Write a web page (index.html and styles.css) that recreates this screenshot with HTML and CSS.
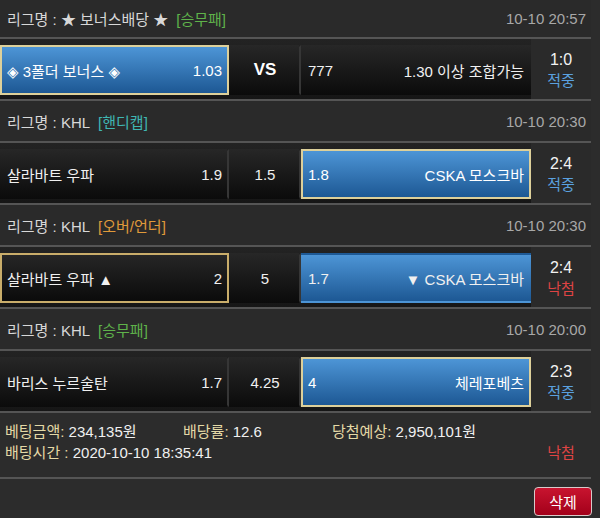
FILE: index.html
```html
<!DOCTYPE html>
<html lang="ko">
<head>
<meta charset="utf-8">
<title>배팅내역</title>
<link rel="stylesheet" href="styles.css">
</head>
<body>
<div class="page">
  <div class="block">
    <div class="league first">
      <span class="lbl">리그명 : ★ 보너스배당 ★</span><span class="tag green">[승무패]</span>
      <span class="time">10-10 20:57</span>
    </div>
    <div class="match">
      <div class="cell home sel-blue"><span>◈ 3폴더 보너스 ◈</span><span>1.03</span></div>
      <div class="cell mid"><b class="vs">VS</b></div>
      <div class="cell away"><span>777</span><span>1.30 이상 조합가능</span></div>
      <div class="score"><div>1:0</div><div class="hit">적중</div></div>
    </div>
  </div>

  <div class="block">
    <div class="league">
      <span class="lbl">리그명 : KHL</span><span class="tag cyan">[핸디캡]</span>
      <span class="time">10-10 20:30</span>
    </div>
    <div class="match">
      <div class="cell home"><span>살라바트 우파</span><span>1.9</span></div>
      <div class="cell mid"><span>1.5</span></div>
      <div class="cell away sel-blue"><span>1.8</span><span>CSKA 모스크바</span></div>
      <div class="score"><div>2:4</div><div class="hit">적중</div></div>
    </div>
  </div>

  <div class="block">
    <div class="league">
      <span class="lbl">리그명 : KHL</span><span class="tag orange">[오버/언더]</span>
      <span class="time">10-10 20:30</span>
    </div>
    <div class="match">
      <div class="cell home sel-dark"><span>살라바트 우파 ▲</span><span>2</span></div>
      <div class="cell mid"><span>5</span></div>
      <div class="cell away sel-blue-nb"><span>1.7</span><span>▼ CSKA 모스크바</span></div>
      <div class="score"><div>2:4</div><div class="miss">낙첨</div></div>
    </div>
  </div>

  <div class="block">
    <div class="league">
      <span class="lbl">리그명 : KHL</span><span class="tag green">[승무패]</span>
      <span class="time">10-10 20:00</span>
    </div>
    <div class="match">
      <div class="cell home"><span>바리스 누르술탄</span><span>1.7</span></div>
      <div class="cell mid"><span>4.25</span></div>
      <div class="cell away sel-blue"><span>4</span><span>체레포베츠</span></div>
      <div class="score"><div>2:3</div><div class="hit">적중</div></div>
    </div>
  </div>

  <div class="info">
    <div><span class="k">베팅금액:</span> 234,135원</div>
    <div><span class="k">배당률:</span> 12.6</div>
    <div><span class="k">당첨예상:</span> 2,950,101원</div>
    <div></div>
    <div class="span3"><span class="k">배팅시간 :</span> 2020-10-10 18:35:41</div>
    <div class="miss res">낙첨</div>
  </div>

  <div class="footer">
    <button class="del" type="button">삭제</button>
  </div>
</div>
</body>
</html>
```

FILE: styles.css
```css
html, body {
  margin: 0;
  padding: 0;
}
body {
  background: #2c2c2c;
  font-family: "Liberation Sans", "Noto Sans CJK KR", "DejaVu Sans", sans-serif;
  font-size: 15px;
  color: #f2f2f2;
  width: 600px;
  height: 518px;
  overflow: hidden;
}
.page {
  width: 600px;
}
.block {
  width: 591px;
}
.league {
  height: 40px;
  border-bottom: 2px solid #555;
  background: #2a2a2a;
  display: flex;
  align-items: center;
  padding: 0 5px 0 7px;
  box-sizing: content-box;
  width: 579px;
}
.league.first {
  height: 37px;
}
.lbl {
  color: #d8d8d8;
}
.tag {
  margin-left: 8px;
}
.tag.green { color: #5fb24a; }
.tag.cyan { color: #3fb6b2; }
.tag.orange { color: #e09a3a; }
.time {
  margin-left: auto;
  color: #a8a8a8;
}
.match {
  height: 60px;
  border-bottom: 2px solid #555;
  display: grid;
  grid-template-columns: 229px 72px 230px 60px;
  background: linear-gradient(#232323, #161616);
}
.cell {
  margin-top: 6px;
  height: 50px;
  box-sizing: border-box;
  border: 2px solid transparent;
  border-right-color: #363636;
  background: linear-gradient(#272727, #0b0b0b);
  background-origin: border-box;
  display: flex;
  align-items: center;
  justify-content: space-between;
  padding: 0 5px 0 5px;
  color: #f0f0f0;
  white-space: nowrap;
}
.cell.mid {
  justify-content: center;
}
.cell.away {
  border-right-color: transparent;
}
.vs {
  font-size: 17px;
  font-weight: bold;
  color: #fff;
}
.sel-blue, .cell.away.sel-blue {
  background: linear-gradient(#4d95d6, #1d5894);
  border: 2px solid #ddd09a;
  color: #fff;
}
.cell.away.sel-blue-nb {
  background: linear-gradient(#4d95d6, #1d5894);
  border-color: transparent;
}
.sel-dark {
  border: 2px solid #c9ad6a;
  background: linear-gradient(#262626, #0b0b0b);
}
.score {
  background: #2a2a2a;
  display: flex;
  flex-direction: column;
  justify-content: center;
  align-items: center;
  padding-top: 2px;
  line-height: 21px;
}
.score > div:first-child {
  font-size: 16px;
}
.hit { color: #5aa0df; }
.miss { color: #de4444; }
.info {
  width: 586px;
  padding: 8px 0 14px 5px;
  border-bottom: 2px solid #555;
  background: #2c2c2c;
  display: grid;
  grid-template-columns: 178px 149px 199px 60px;
  line-height: 21px;
  color: #f0f0f0;
}
.info .k {
  color: #e4d9a6;
}
.span3 {
  grid-column: span 3;
}
.res {
  text-align: center;
}
.footer {
  display: flex;
  justify-content: flex-end;
  padding: 8px 8px 0 0;
}
.del {
  width: 58px;
  height: 29px;
  border: 1px solid #d9c9c9;
  border-radius: 4px;
  background: linear-gradient(#c8142f, #a3001a);
  color: #fff;
  font-family: "Liberation Sans", "Noto Sans CJK KR", sans-serif;
  font-size: 15px;
  padding: 0;
}
```
